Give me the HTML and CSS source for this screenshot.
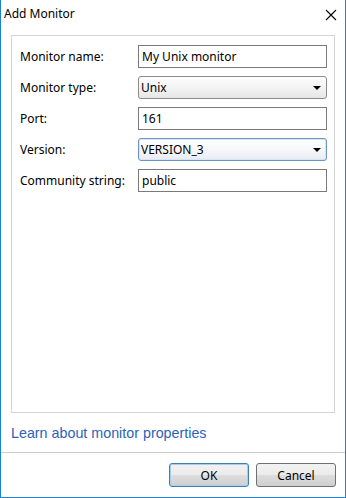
FILE: index.html
```html
<!DOCTYPE html>
<html lang="en">
<head>
  <meta charset="UTF-8" />
  <meta name="viewport" content="width=device-width, initial-scale=1.0" />
  <title>Add Monitor</title>
  <link rel="stylesheet" href="styles.css">
</head>
<body>
  <div class="window">
    <div class="titlebar">
      <span class="title">Add Monitor</span>
      <span class="close">
        <svg width="12" height="12" viewBox="0 0 12 12"><path d="M1 1L11 11M11 1L1 11" stroke="#000" stroke-width="1.1" fill="none"/></svg>
      </span>
    </div>

    <div class="group">
      <div class="row">
        <label>Monitor name:</label>
        <div class="field">My Unix monitor</div>
      </div>
      <div class="row">
        <label>Monitor type:</label>
        <div class="combo">Unix<span class="arrow"></span></div>
      </div>
      <div class="row">
        <label>Port:</label>
        <div class="field">161</div>
      </div>
      <div class="row">
        <label>Version:</label>
        <div class="combo focused">VERSION_3<span class="arrow"></span></div>
      </div>
      <div class="row">
        <label>Community string:</label>
        <div class="field">public</div>
      </div>
    </div>

    <div class="linkbar">
      <a href="#" class="link">Learn about monitor properties</a>
    </div>

    <div class="buttons">
      <button class="btn default">OK</button>
      <button class="btn">Cancel</button>
    </div>
  </div>
</body>
</html>
```

FILE: styles.css
```css
html, body {
  margin: 0;
  padding: 0;
  background: #fff;
}
body {
  font-family: "Noto Sans", "Liberation Sans", sans-serif;
  font-size: 12px;
  color: #000;
}
.window {
  width: 344px;
  height: 497px;
  border: 1px solid #1883d7;
  border-top: none;
  display: flex;
  flex-direction: column;
}
.titlebar {
  height: 30px;
  display: flex;
  align-items: center;
  justify-content: space-between;
  padding: 0 8px 3px 3px;
  box-sizing: border-box;
}
.title {
  font-size: 12px;
}
.close {
  display: flex;
  margin-top: 3px;
}
.group {
  margin: 5px 10px 0 10px;
  height: 378px;
  box-sizing: border-box;
  border: 1px solid #d5d5d5;
  padding: 9px 7px 0 8px;
  display: flex;
  flex-direction: column;
  gap: 8px;
}
.row {
  display: flex;
  align-items: center;
  height: 23px;
}
.row label {
  width: 118px;
  flex: none;
}
.field, .combo {
  width: 189px;
  height: 23px;
  box-sizing: border-box;
  display: flex;
  align-items: center;
  padding-left: 3px;
}
.field {
  border: 1px solid #7a7a7a;
}
.combo {
  position: relative;
  border: 1px solid #8c8c8c;
  border-radius: 3px;
  background: linear-gradient(#fdfdfd, #f3f3f3 50%, #e6e6e6);
  padding-left: 2px;
}
.combo.focused {
  border-color: #6f93c4;
  box-shadow: inset 0 0 0 1px #d6e6f7;
  background: linear-gradient(#ffffff, #f6f8fb 50%, #e7ebf0);
}
.arrow {
  position: absolute;
  right: 5px;
  top: 9px;
  width: 0;
  height: 0;
  border-left: 4px solid transparent;
  border-right: 4px solid transparent;
  border-top: 4px solid #000;
}
.linkbar {
  height: 39px;
  display: flex;
  align-items: center;
  padding-left: 10px;
  border-bottom: 1px solid #cccccc;
}
.link {
  font-family: "Liberation Sans", Arial, sans-serif;
  font-size: 14.3px;
  color: #2b63b9;
  text-decoration: none;
}
.buttons {
  display: flex;
  justify-content: flex-end;
  gap: 7px;
  padding: 10px 9px 0 0;
}
.btn {
  width: 80px;
  height: 24px;
  font-family: "Noto Sans", "Liberation Sans", sans-serif;
  font-size: 12px;
  border: 1px solid #707070;
  border-radius: 3px;
  background: linear-gradient(#f2f2f2, #ebebeb 50%, #dddddd 51%, #cfcfcf);
  padding: 0;
  color: #000;
}
.btn.default {
  border-color: #3c7fb1;
  box-shadow: inset 0 0 0 1px #a9cdeb;
}
```
